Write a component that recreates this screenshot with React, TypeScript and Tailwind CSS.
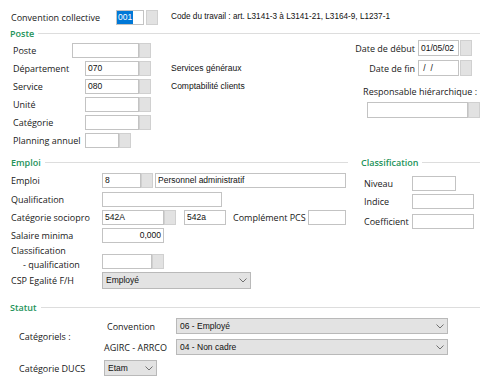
import clsx from "clsx";
import type { ReactNode } from "react";

const lbl = "font-['Open_Sans',sans-serif] text-[9px] leading-none text-[#202020] whitespace-nowrap";

function Box({ className = "", children, right = false }: { className?: string; children?: ReactNode; right?: boolean }) {
  return (
    <div
      className={clsx(
        "h-[15px] shrink-0 border border-[#c3c3c3] bg-white flex items-center px-[2px] font-['Liberation_Sans',Arial,sans-serif] text-[8.5px] text-[#111] whitespace-nowrap overflow-hidden",
        right && "justify-end",
        className
      )}
    >
      {children}
    </div>
  );
}

function Dots({ className = "" }: { className?: string }) {
  return <div className={clsx("w-[12px] h-[15px] shrink-0 bg-[#e2e2e2] border border-[#d0d0d0]", className)} />;
}

function Select({ className = "", value }: { className?: string; value: string }) {
  return (
    <div
      className={clsx(
        "h-[16px] shrink-0 flex items-center justify-between pl-[3px] pr-[3px] bg-[#e3e3e3] border border-[#b9b9b9] font-['Liberation_Sans',Arial,sans-serif] text-[8.5px] text-[#111]",
        className
      )}
    >
      <span>{value}</span>
      <svg width="8" height="5" viewBox="0 0 8 5" className="text-[#707070]">
        <polyline points="0.5,0.5 4,4 7.5,0.5" fill="none" stroke="currentColor" strokeWidth="1" />
      </svg>
    </div>
  );
}

function Head({ title, className = "" }: { title: string; className?: string }) {
  return (
    <div className={clsx("flex items-center h-[12px] gap-[4px]", className)}>
      <span className="font-['Open_Sans',sans-serif] text-[9px] font-semibold leading-none text-[#23935a]">{title}</span>
      <div className="flex-1 h-px bg-[#dddddd]" />
    </div>
  );
}

function Row({ label, labelW, children, className = "" }: { label: ReactNode; labelW: string; children: ReactNode; className?: string }) {
  return (
    <div className={clsx("flex items-center", className)}>
      <span className={clsx(lbl, labelW)}>{label}</span>
      {children}
    </div>
  );
}

export default function App() {
  return (
    <div className="w-[489px] h-[384px] bg-white overflow-hidden">
      {/* Convention collective */}
      <div className="flex items-center h-[15px] mt-[10px] ml-[11px]">
        <span className={clsx(lbl, "w-[105px]")}>Convention collective</span>
        <Box className="w-[28px] !px-0">
          <span className="bg-[#0078d7] text-white h-full flex items-center px-[1px]">001</span>
        </Box>
        <Dots className="ml-[2px]" />
        <span className="ml-[13px] font-['Liberation_Sans',Arial,sans-serif] text-[8.2px] text-[#111] whitespace-nowrap">
          Code du travail : art. L3141-3 à L3141-21, L3164-9, L1237-1
        </span>
      </div>

      {/* Poste */}
      <Head title="Poste" className="mt-[2px] ml-[10px] mr-[9px]" />
      <div className="flex mt-[4px]">
        <div className="flex flex-col gap-[3px] ml-[13px] w-[139px] shrink-0">
          <Row label="Poste" labelW="w-[59px]">
            <Box className="w-[67px]" />
            <Dots />
          </Row>
          <Row label="Département" labelW="w-[72px]">
            <Box className="w-[54px]">070</Box>
            <Dots />
          </Row>
          <Row label="Service" labelW="w-[72px]">
            <Box className="w-[54px]">080</Box>
            <Dots />
          </Row>
          <Row label="Unité" labelW="w-[72px]">
            <Box className="w-[54px]" />
            <Dots />
          </Row>
          <Row label="Catégorie" labelW="w-[72px]">
            <Box className="w-[54px]" />
            <Dots />
          </Row>
          <Row label="Planning annuel" labelW="w-[72px]">
            <Box className="w-[34px]" />
            <Dots />
          </Row>
        </div>
        <div className="flex flex-col gap-[3px] ml-[19px] font-['Liberation_Sans',Arial,sans-serif] text-[8.5px] text-[#111]">
          <div className="h-[15px]" />
          <div className="h-[15px] flex items-center">Services généraux</div>
          <div className="h-[15px] flex items-center">Comptabilité clients</div>
        </div>
        <div className="flex-1 flex flex-col items-end -mt-[3px]">
          <div className="flex items-center mr-[17px]">
            <span className={clsx(lbl, "mr-[3px]")}>Date de début</span>
            <Box className="w-[41px] h-[16px]">01/05/02</Box>
            <Dots className="ml-px h-[16px]" />
          </div>
          <div className="flex items-center mr-[17px] mt-[4px]">
            <span className={clsx(lbl, "mr-[3px]")}>Date de fin</span>
            <Box className="w-[41px] h-[16px]">&nbsp;/ &nbsp;/</Box>
            <Dots className="ml-px h-[16px]" />
          </div>
          <span className={clsx(lbl, "mr-[12px] mt-[11px]")}>Responsable hiérarchique :</span>
          <div className="flex items-center mr-[9px] mt-[6px]">
            <Box className="w-[101px] h-[16px]" />
            <Dots className="h-[16px]" />
          </div>
        </div>
      </div>

      {/* Emploi / Classification */}
      <div className="flex mt-[8px]">
        <div className="w-[348px] shrink-0">
          <Head title="Emploi" className="ml-[11px]" />
          <div className="flex flex-col ml-[11px] mt-[5px]">
            <Row label="Emploi" labelW="w-[91px]">
              <Box className="w-[39px]">8</Box>
              <Dots />
              <Box className="w-[191px] ml-[2px]">Personnel administratif</Box>
            </Row>
            <Row label="Qualification" labelW="w-[91px]" className="mt-[4px]">
              <Box className="w-[120px]" />
            </Row>
            <Row label="Catégorie sociopro" labelW="w-[91px]" className="mt-[3px]">
              <Box className="w-[62px]">542A</Box>
              <Dots />
              <Box className="w-[42px] ml-[8px]">542a</Box>
              <span className={clsx(lbl, "ml-[7px] w-[75px]")}>Complément PCS</span>
              <Box className="w-[38px]" />
            </Row>
            <Row label="Salaire minima" labelW="w-[91px]" className="mt-[3px]">
              <Box className="w-[62px]" right>
                0,000
              </Box>
            </Row>
            <Row
              label={
                <span className="flex flex-col gap-[5px]">
                  <span>Classification</span>
                  <span className="pl-[12px]">- qualification</span>
                </span>
              }
              labelW="w-[91px]"
              className="mt-[3px] !items-end"
            >
              <Box className="w-[50px]" />
              <Dots />
            </Row>
            <Row label="CSP Egalité F/H" labelW="w-[91px]" className="mt-[3px]">
              <Select className="w-[149px] h-[17px]" value="Employé" />
            </Row>
          </div>
        </div>
        <div className="flex-1 ml-[13px] mr-[9px]">
          <Head title="Classification" />
          <div className="flex flex-col mt-[8px] ml-[3px]">
            <Row label="Niveau" labelW="w-[48px]">
              <Box className="w-[44px]" />
            </Row>
            <Row label="Indice" labelW="w-[48px]" className="mt-[3px]">
              <Box className="w-[62px]" />
            </Row>
            <Row label="Coefficient" labelW="w-[48px]" className="mt-[5px]">
              <Box className="w-[62px]" />
            </Row>
          </div>
        </div>
      </div>

      {/* Statut */}
      <Head title="Statut" className="mt-[12px] ml-[10px] mr-[9px]" />
      <div className="flex items-center mt-[5px] ml-[19px]">
        <span className={clsx(lbl, "w-[85px]")}>Catégoriels :</span>
        <div className="flex flex-col gap-[5px]">
          <div className="flex items-center">
            <span className={clsx(lbl, "w-[72px] pl-[3px]")}>Convention</span>
            <Select className="w-[272px]" value="06 - Employé" />
          </div>
          <div className="flex items-center">
            <span className={clsx(lbl, "w-[72px]")}>AGIRC - ARRCO</span>
            <Select className="w-[272px]" value="04 - Non cadre" />
          </div>
        </div>
      </div>
      <div className="flex items-center mt-[5px] ml-[19px]">
        <span className={clsx(lbl, "w-[85px]")}>Catégorie DUCS</span>
        <Select className="w-[53px]" value="Etam" />
      </div>
    </div>
  );
}
